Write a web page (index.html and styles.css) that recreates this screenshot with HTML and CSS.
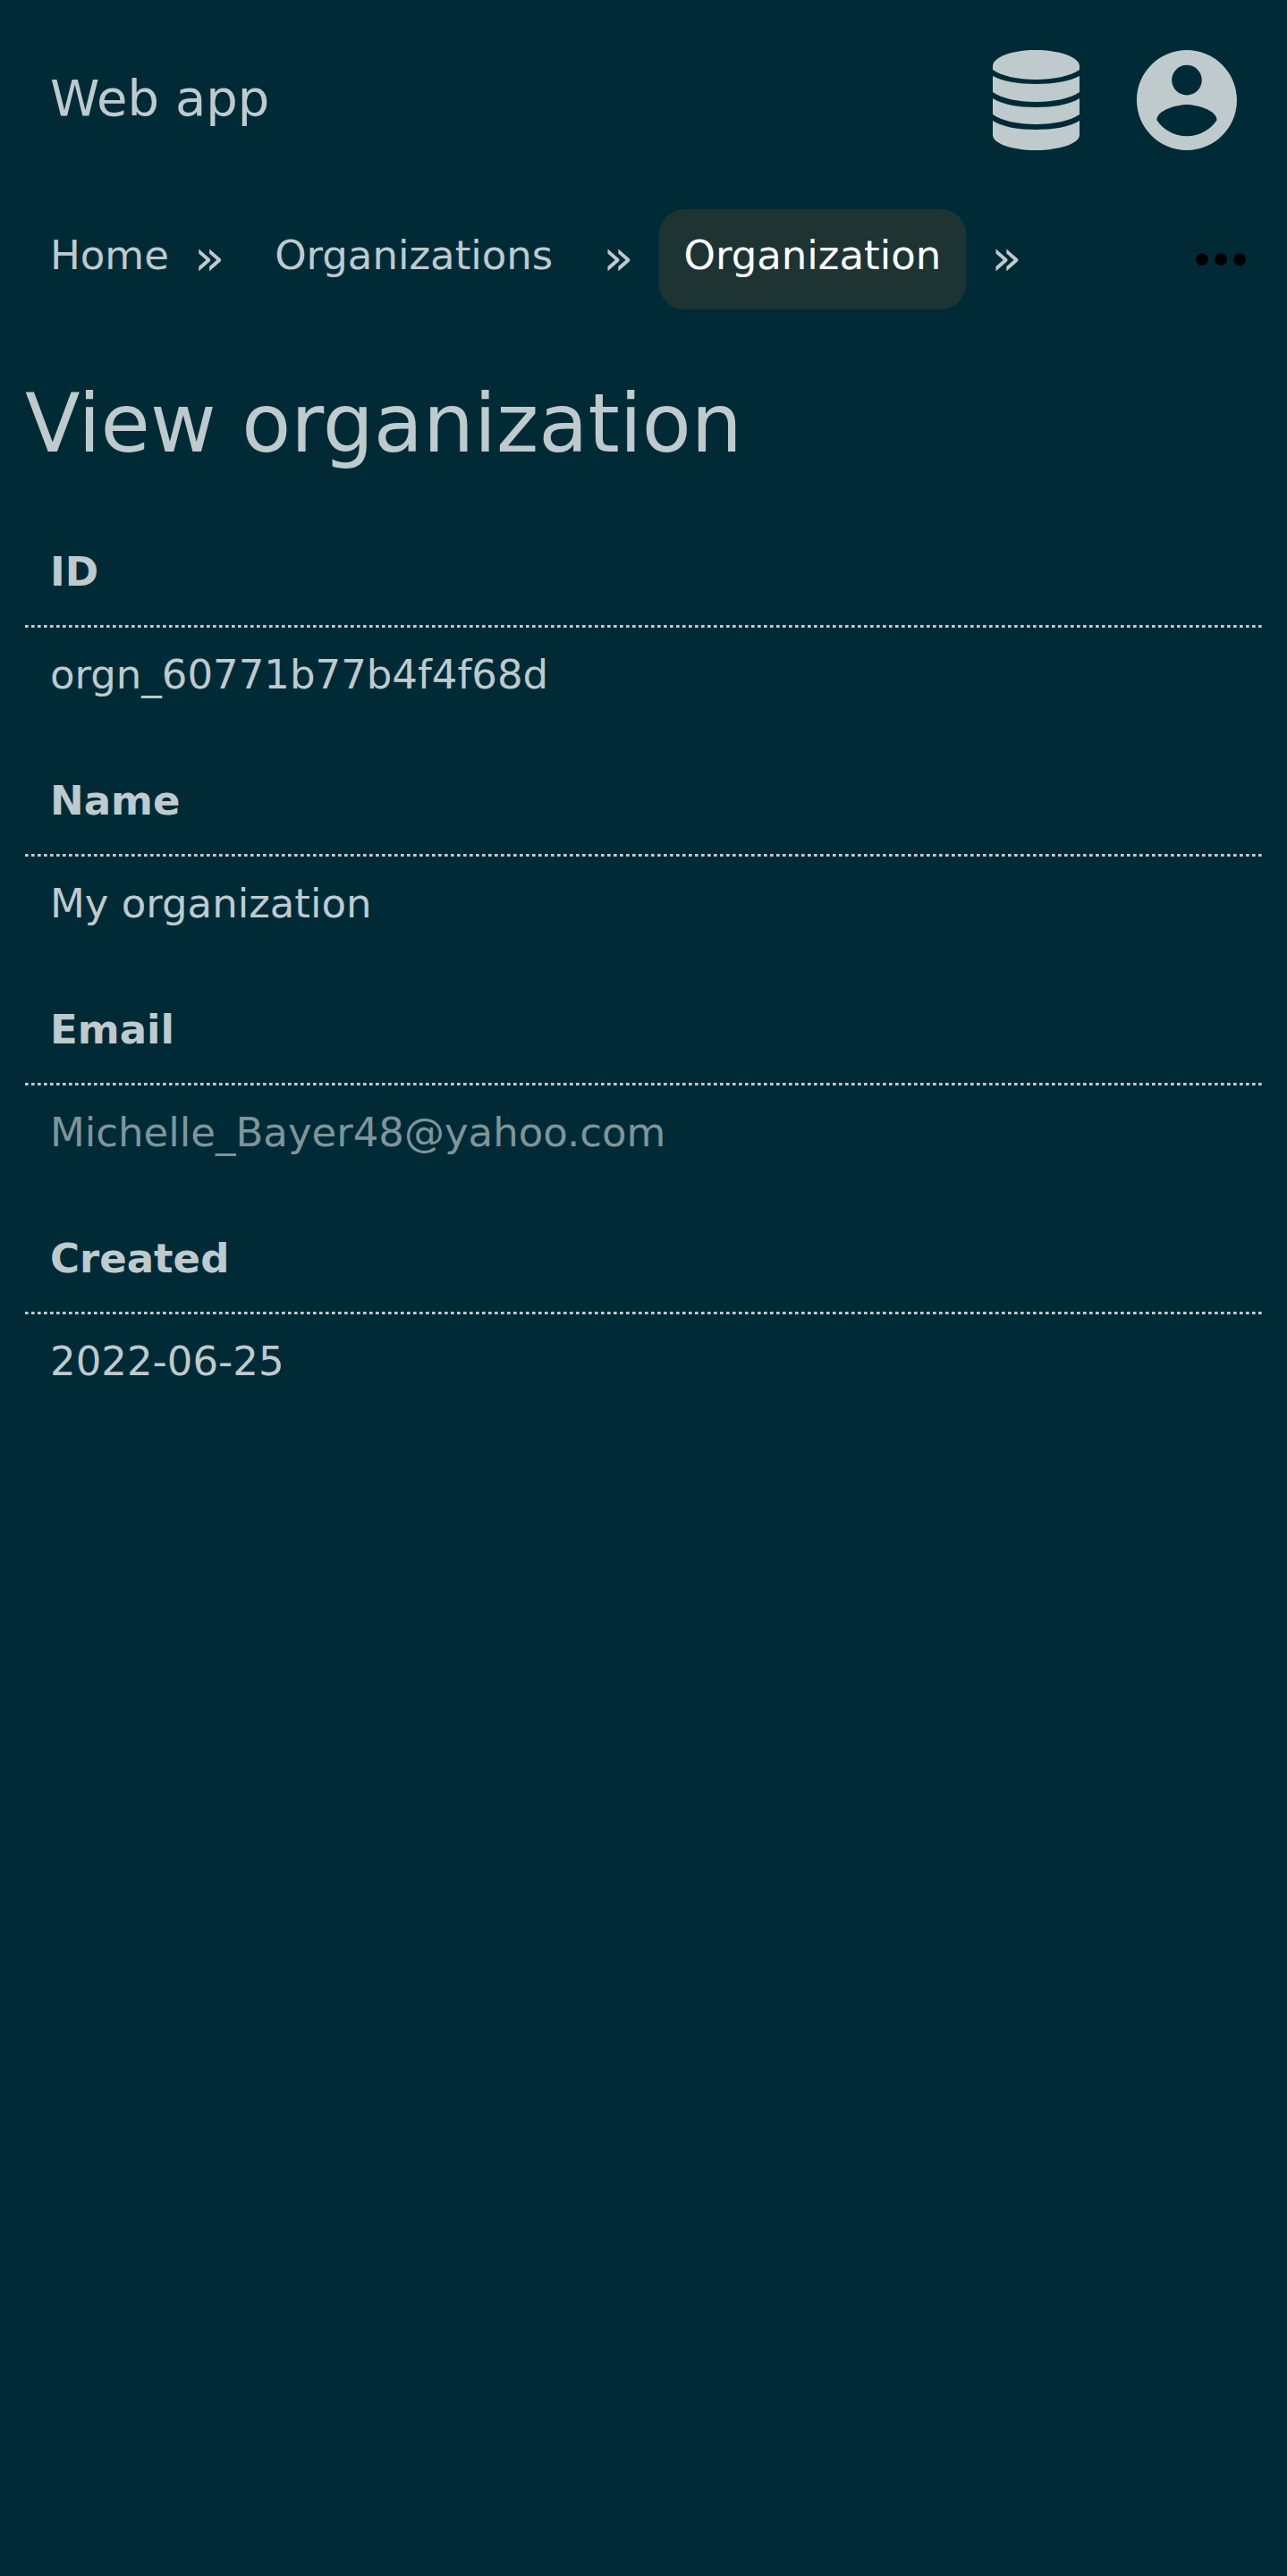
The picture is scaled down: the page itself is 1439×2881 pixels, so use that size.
FILE: index.html
```html
<!DOCTYPE html>
<html lang="en">
<head>
<meta charset="utf-8">
<meta name="viewport" content="width=device-width, initial-scale=1">
<title>View organization</title>
<link rel="stylesheet" href="styles.css">
</head>
<body>
<header class="header">
  <a class="brand" href="#">Web app</a>
  <nav class="header-links" aria-label="Account">
    <a class="icon-link" href="#" aria-label="Data">
      <svg class="icon" viewBox="0 0 112 112" aria-hidden="true">
        <path d="M7 18C7 8 28 0 55 0s49 8 49 18v4C94 29 75 33 55 33S17 29 7 22z"/>
        <path d="M7 29c11 6 29 9 48 9s38-3 49-9v18c-10 7-29 11-49 11S17 54 7 47z"/>
        <path d="M7 54c11 7 29 10 48 10s38-3 49-10v18c-10 7-29 11-49 11S17 79 7 72z"/>
        <path d="M7 79c11 7 29 10 48 10s38-3 49-10v16c0 9-21 17-49 17S7 104 7 95z"/>
      </svg>
    </a>
    <a class="icon-link" href="#" aria-label="Profile">
      <svg class="icon" viewBox="2 2 20 20" aria-hidden="true">
        <path d="M12 2C6.480 2 2 6.480 2 12s4.480 10 10 10 10-4.480 10-10S17.520 2 12 2zm0 3c1.660 0 3 1.340 3 3s-1.340 3-3 3-3-1.340-3-3 1.340-3 3-3zm0 14.200c-2.500 0-4.710-1.280-6-3.220.03-1.990 4-3.080 6-3.080 1.990 0 5.970 1.090 6 3.080-1.290 1.940-3.500 3.220-6 3.220z"/>
      </svg>
    </a>
  </nav>
</header>
<div class="toolbar">
  <nav class="crumbs" aria-label="Breadcrumb">
    <a class="crumb crumb-home" href="#">Home</a>
    <span class="sep" aria-hidden="true">»</span>
    <a class="crumb" href="#">Organizations</a>
    <span class="sep" aria-hidden="true">»</span>
    <a class="crumb crumb-active" href="#" aria-current="page">Organization</a>
    <span class="sep" aria-hidden="true">»</span>
  </nav>
  <button class="more" type="button" aria-label="More">
    <svg class="more-icon" viewBox="0 0 24 24" aria-hidden="true">
      <circle cx="6" cy="12" r="2"/><circle cx="12" cy="12" r="2"/><circle cx="18" cy="12" r="2"/>
    </svg>
  </button>
</div>
<main class="main">
  <h1 class="title">View organization</h1>
  <dl class="details">
    <div class="field"><dt class="label">ID</dt><dd class="value">orgn_60771b77b4f4f68d</dd></div>
    <div class="field"><dt class="label">Name</dt><dd class="value">My organization</dd></div>
    <div class="field"><dt class="label">Email</dt><dd class="value value-muted">Michelle_Bayer48@yahoo.com</dd></div>
    <div class="field"><dt class="label">Created</dt><dd class="value">2022-06-25</dd></div>
  </dl>
</main>
</body>
</html>
```
FILE: styles.css
```css
:root {
  --bg: #002b36;
  --text: #bfcacd;
  --muted: #7f959a;
  --active-bg: #1e3433;
}
* { box-sizing: border-box; }
body {
  margin: 0;
  min-height: 100vh;
  background: var(--bg);
  color: var(--text);
  font-family: "DejaVu Sans", sans-serif;
  font-size: 45px;
  line-height: 68px;
}
a { color: inherit; text-decoration: none; }
.header {
  display: flex;
  align-items: center;
  justify-content: space-between;
  padding: 56px;
}
.brand,
.sep {
  padding-bottom: 4px;
  font-size: 56px;
}
.header-links { display: flex; gap: 56px; }
.icon-link { display: block; }
.icon {
  display: block;
  width: 112px;
  height: 112px;
  fill: currentColor;
}
.toolbar {
  display: flex;
  align-items: center;
  justify-content: space-between;
  padding: 10px 32px 28px 56px;
}
.crumbs {
  display: flex;
  align-items: center;
  gap: 28px;
}
.crumb {
  padding: 18px 28px 26px;
  border-radius: 28px;
}
.crumb-home { padding-left: 0; padding-right: 0; }
.crumb-active { background: var(--active-bg); color: #fff; }
.more {
  padding: 0;
  border: 0;
  background: none;
  color: #000;
}
.more-icon {
  display: block;
  width: 84px;
  height: 84px;
  fill: currentColor;
}
.main { padding: 32px 28px 28px; }
.title {
  margin: 0 0 64px;
  font-size: 90px;
  font-weight: 400;
  line-height: 136px;
}
.details { margin: 0; }
.field { padding-bottom: 73px; }
.label {
  padding: 0 28px 28px;
  font-weight: 700;
  /* dotted rule: square dots on a 7px pitch */
  background: repeating-linear-gradient(to right, var(--text) 0 3px, var(--muted) 3px 4px, transparent 4px 7px) left bottom / 100% 3px no-repeat;
}
.value {
  margin: 0;
  padding: 19px 28px 0;
}
.value-muted { color: var(--muted); }
```
